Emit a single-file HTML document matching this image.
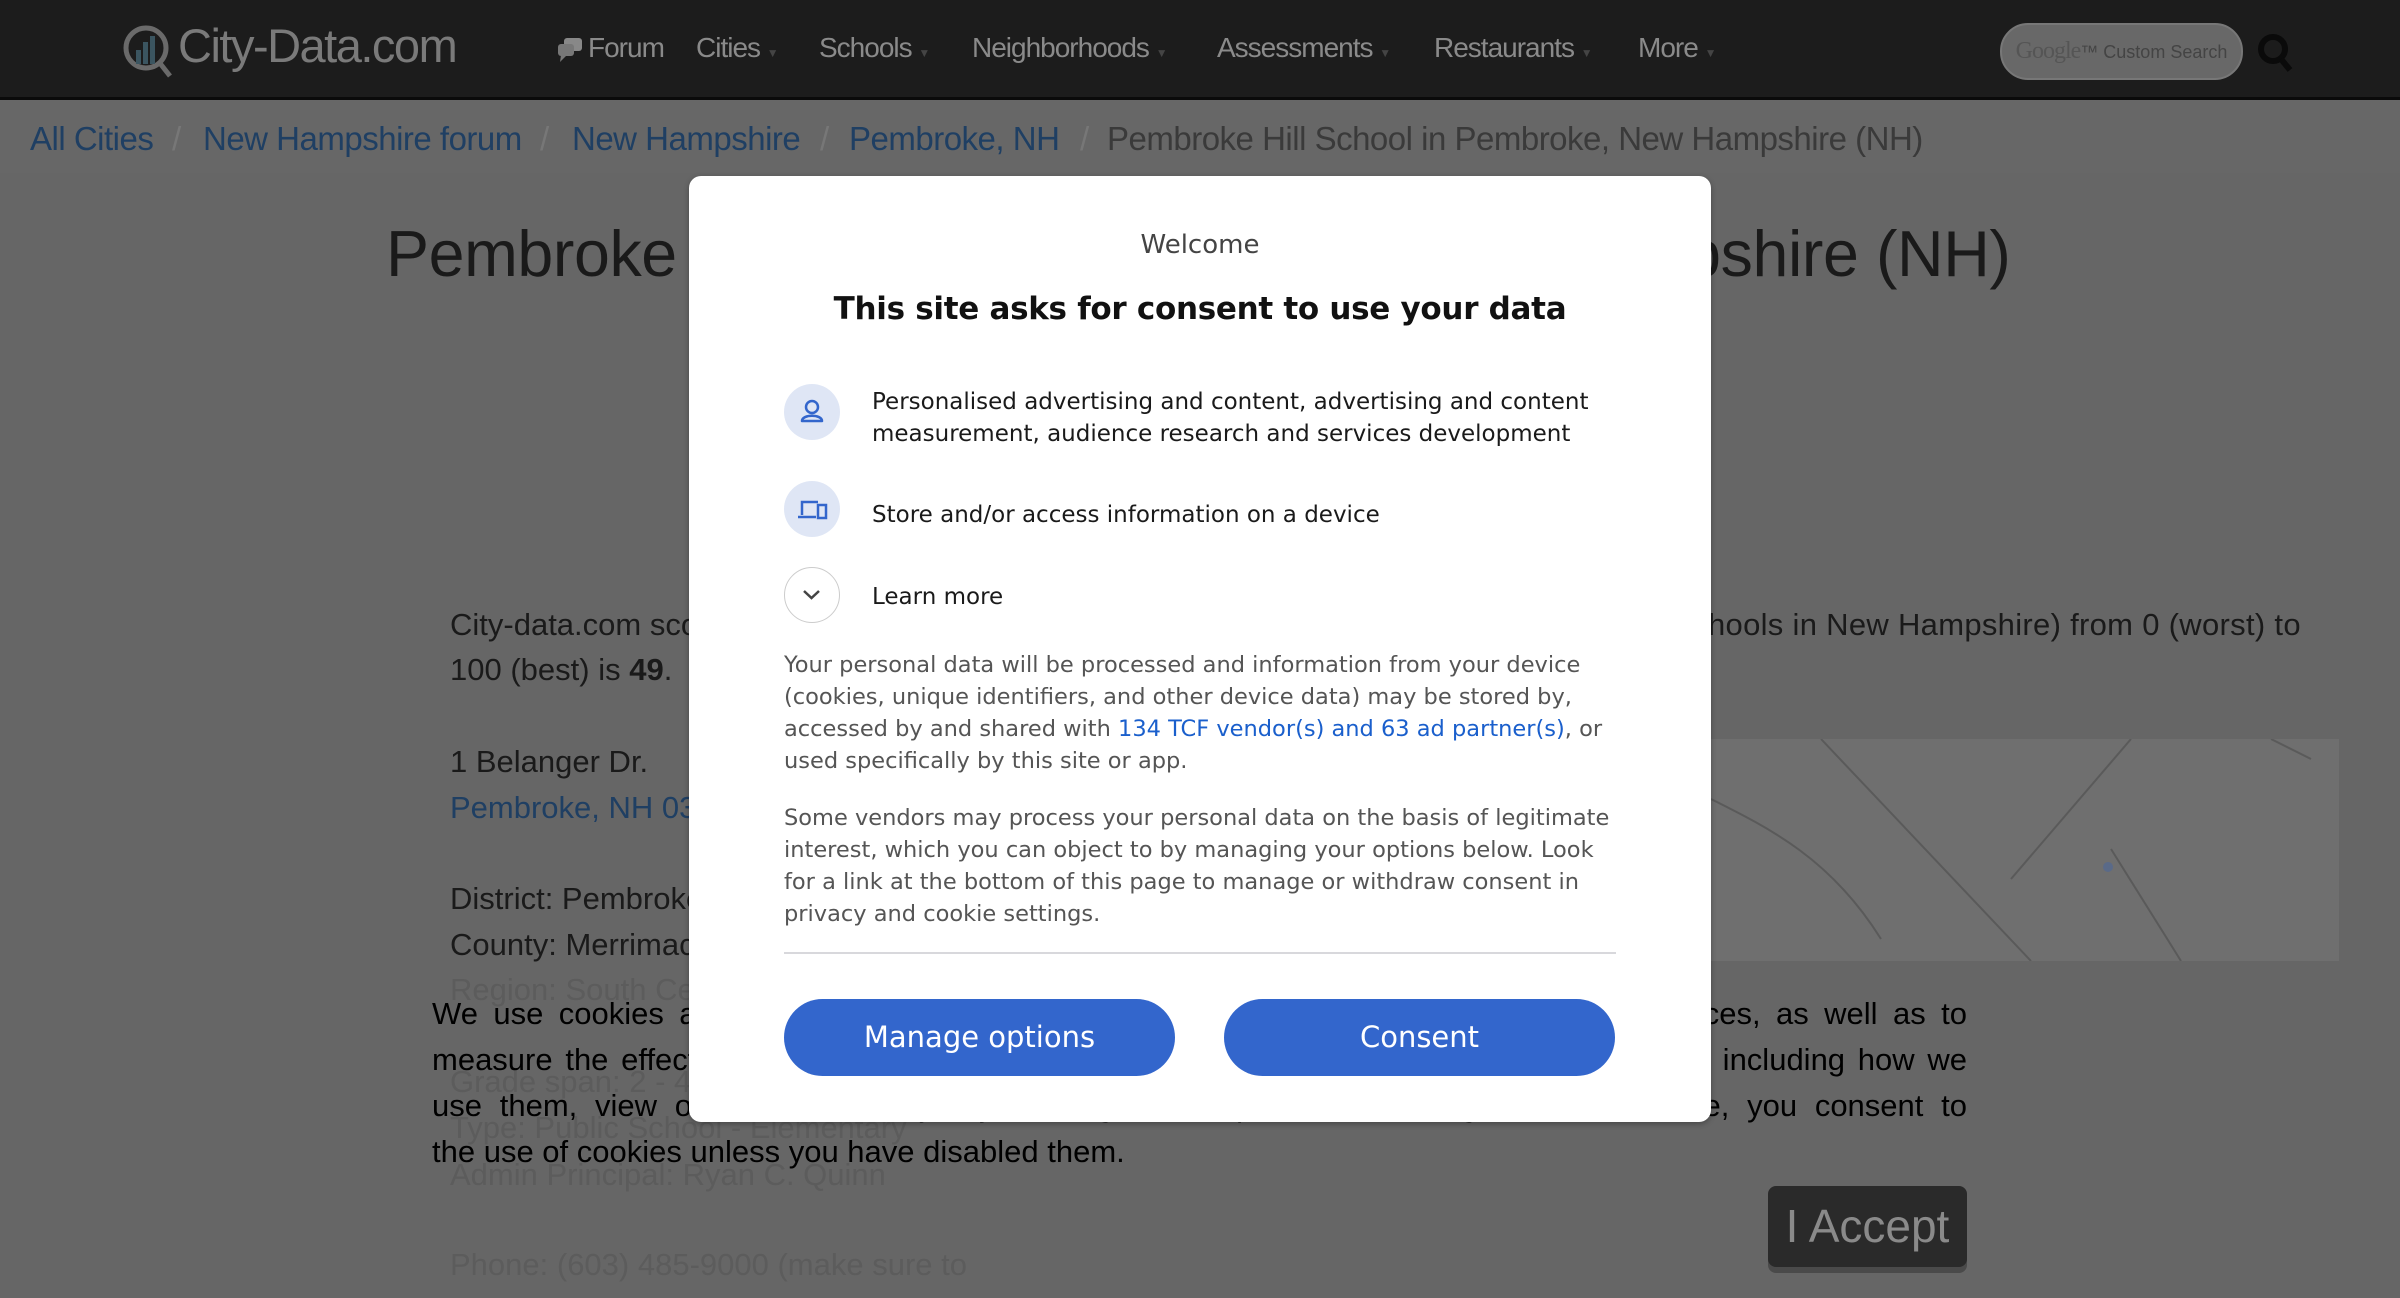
<!DOCTYPE html>
<html><head><meta charset="utf-8">
<style>
*{margin:0;padding:0;box-sizing:border-box}
body{width:2400px;height:1298px;overflow:hidden;background:#666;font-family:"Liberation Sans",Arial,sans-serif;position:relative}
.nav{position:absolute;left:0;top:0;width:2400px;height:100px;background:#1c1c1c;border-bottom:3px solid #0a0a0a}
.nav span{position:absolute;top:32px;font-size:28px;color:#8a8a8a;letter-spacing:-1px}
.logo{position:absolute;left:120px;top:18px;font-size:47px;color:#7a7a7a;letter-spacing:-1.5px}
.crumb{position:absolute;left:0;top:100px;width:2400px;height:73px;background:#676767}
.crumb span{position:absolute;top:20px;font-size:33px;color:#1f3f63;letter-spacing:-0.5px}
.crumb .s{color:#777}
.crumb .c{color:#3a3a3a}
.bg{position:absolute;font-size:31px;color:#1a1a1a;white-space:nowrap}
.fade{color:#5c5c5c}
.map{position:absolute;left:1711px;top:739px;width:628px;height:222px;background:#6f6f6f}
.cookie{position:absolute;left:432px;width:1535px;font-size:31px;line-height:46px;color:#000;white-space:nowrap}
.j{text-align:justify;text-align-last:justify;white-space:normal}
.accept{position:absolute;left:1768px;top:1186px;width:199px;height:81px;background:#2a2a2a;border-radius:8px;color:#8a8a8a;font-size:46px;text-align:center;line-height:81px;box-shadow:0 6px 0 #4a4a4a}
.modal{position:absolute;left:689px;top:176px;width:1022px;height:946px;background:#fff;border-radius:12px;box-shadow:0 2px 6px rgba(0,0,0,.3);font-family:"DejaVu Sans","Liberation Sans",sans-serif;color:#222}
.modal .w{position:absolute;top:54px;width:100%;text-align:center;font-size:26px;color:#444}
.modal h1{position:absolute;top:115px;width:100%;text-align:center;font-size:31px;font-weight:bold;color:#111;letter-spacing:-0.3px}
.ic{position:absolute;left:95px;width:56px;height:56px;border-radius:50%;background:#dfe6f5}
.it{position:absolute;left:183px;font-size:23px;line-height:32px;color:#1a1a1a}
.p{position:absolute;left:95px;width:840px;font-size:22.5px;line-height:32px;color:#555}
.p a{color:#1a5fcc;text-decoration:none}
.hr{position:absolute;left:95px;top:776px;width:832px;height:2px;background:#d8d8dc}
.btn{position:absolute;top:823px;width:391px;height:77px;border-radius:39px;background:#3366cc;color:#fff;font-size:29px;text-align:center;line-height:77px}
</style></head><body>
<div class="nav">
<div class="logo"><svg width="56" height="56" viewBox="0 0 56 56" style="vertical-align:middle;margin-right:2px"><circle cx="26" cy="26" r="20" fill="none" stroke="#6a6a6a" stroke-width="5"/><line x1="39" y1="40" x2="50" y2="54" stroke="#6a6a6a" stroke-width="5"/><rect x="16" y="28" width="5" height="14" fill="#3b5560"/><rect x="23" y="20" width="5" height="22" fill="#3b5560"/><rect x="30" y="14" width="5" height="28" fill="#3b5560"/></svg>City-Data.com</div>
<svg style="position:absolute;left:556px;top:36px" width="28" height="28" viewBox="0 0 28 28"><rect x="8" y="2" width="18" height="13" rx="3" fill="#888"/><rect x="2" y="8" width="16" height="12" rx="3" fill="#777"/><path d="M5 19 L4 26 L10 20Z" fill="#777"/></svg>
<span style="left:588px">Forum</span>
<span style="left:696px">Cities <small style="font-size:12px;color:#444">▼</small></span>
<span style="left:819px">Schools <small style="font-size:12px;color:#444">▼</small></span>
<span style="left:972px">Neighborhoods <small style="font-size:12px;color:#444">▼</small></span>
<span style="left:1217px">Assessments <small style="font-size:12px;color:#444">▼</small></span>
<span style="left:1434px">Restaurants <small style="font-size:12px;color:#444">▼</small></span>
<span style="left:1638px">More <small style="font-size:12px;color:#444">▼</small></span>
<div style="position:absolute;left:2000px;top:23px;width:243px;height:57px;border-radius:28px;background:#686868;border:2px solid #777;color:#444;font-size:18px;line-height:53px;text-align:center"><span style="position:static;font-family:'Liberation Serif',serif;font-size:24px;color:#555">Google</span>™ Custom Search</div>
<svg style="position:absolute;left:2256px;top:32px" width="40" height="44" viewBox="0 0 40 44"><circle cx="17" cy="17" r="12" fill="none" stroke="#0a0a0a" stroke-width="6"/><line x1="25" y1="27" x2="34" y2="38" stroke="#0a0a0a" stroke-width="6"/></svg>
</div>
<div class="crumb">
<span style="left:30px">All Cities</span><span class="s" style="left:172px">/</span>
<span style="left:203px">New Hampshire forum</span><span class="s" style="left:540px">/</span>
<span style="left:572px">New Hampshire</span><span class="s" style="left:820px">/</span>
<span style="left:849px">Pembroke, NH</span><span class="s" style="left:1080px">/</span>
<span class="c" style="left:1107px">Pembroke Hill School in Pembroke, New Hampshire (NH)</span>
</div>
<div class="bg" style="left:386px;top:217px;font-size:64.5px;letter-spacing:-0.4px">Pembroke Hill School in Pembroke, New Hampshire (NH)</div>
<div class="bg" style="left:450px;top:607px">City-data.com score</div>
<div class="bg" style="left:1708px;top:607px;letter-spacing:0.3px">hools in New Hampshire) from 0 (worst) to</div>
<div class="bg" style="left:450px;top:652px">100 (best) is <b>49</b>.</div>
<div class="bg" style="left:450px;top:744px">1 Belanger Dr.</div>
<div class="bg" style="left:450px;top:790px;color:#1f3f63">Pembroke, NH 03275</div>
<div class="bg" style="left:450px;top:881px">District: Pembroke School District</div>
<div class="bg" style="left:450px;top:927px">County: Merrimack</div>
<div class="bg fade" style="left:450px;top:972px">Region: South Central</div>
<div class="bg fade" style="left:450px;top:1064px">Grade span: 2 - 4</div>
<div class="bg fade" style="left:450px;top:1110px">Type: Public School - Elementary</div>
<div class="bg fade" style="left:450px;top:1157px">Admin Principal: Ryan C. Quinn</div>
<div class="bg fade" style="left:450px;top:1247px">Phone: (603) 485-9000 (make sure to</div>
<div class="map"><svg width="628" height="222"><path d="M0 60 C60 90 120 120 170 200 M110 0 L320 222 M300 140 L420 0 M400 110 L470 222 M560 0 L600 20" stroke="#5a5a5a" stroke-width="2" fill="none"/><circle cx="397" cy="128" r="5" fill="#5a6a88"/></svg></div>
<div class="cookie j" style="top:991px">We use cookies and similar methods to recognize visitors and remember their preferences, as well as to</div>
<div class="cookie j" style="top:1037px">measure the effectiveness of campaigns and analyze traffic. To learn more about cookies, including how we</div>
<div class="cookie j" style="top:1083px">use them, view our Cookie Policy. By clicking "I Accept" or continuing to use this site, you consent to</div>
<div class="cookie" style="top:1129px">the use of cookies unless you have disabled them.</div>
<div class="accept">I Accept</div>
<div class="modal">
<div class="w">Welcome</div>
<h1>This site asks for consent to use your data</h1>
<div class="ic" style="top:208px"><svg width="56" height="56" viewBox="0 0 56 56"><circle cx="28" cy="23" r="6" fill="none" stroke="#3366cc" stroke-width="2.5"/><path d="M18 37 C18 30 38 30 38 37 Z" fill="none" stroke="#3366cc" stroke-width="2.5" stroke-linejoin="round"/></svg></div>
<div class="it" style="top:210px">Personalised advertising and content, advertising and content<br>measurement, audience research and services development</div>
<div class="ic" style="top:305px"><svg width="56" height="56" viewBox="0 0 56 56"><path d="M18 34 V21 H34 M14 36 H32" fill="none" stroke="#3366cc" stroke-width="2.5"/><rect x="34" y="24" width="8" height="13" fill="none" stroke="#3366cc" stroke-width="2.5"/></svg></div>
<div class="it" style="top:323px">Store and/or access information on a device</div>
<div class="ic" style="top:391px;background:#fff;border:1.5px solid #ccc"><svg width="53" height="53" viewBox="0 0 53 53"><path d="M19 23 L26.5 30 L34 23" fill="none" stroke="#444" stroke-width="2.5"/></svg></div>
<div class="it" style="top:405px">Learn more</div>
<div class="p" style="top:473px">Your personal data will be processed and information from your device (cookies, unique identifiers, and other device data) may be stored by, accessed by and shared with <a>134 TCF vendor(s) and 63 ad partner(s)</a>, or used specifically by this site or app.</div>
<div class="p" style="top:626px">Some vendors may process your personal data on the basis of legitimate interest, which you can object to by managing your options below. Look for a link at the bottom of this page to manage or withdraw consent in privacy and cookie settings.</div>
<div class="hr"></div>
<div class="btn" style="left:95px">Manage options</div>
<div class="btn" style="left:535px">Consent</div>
</div>
</body></html>
